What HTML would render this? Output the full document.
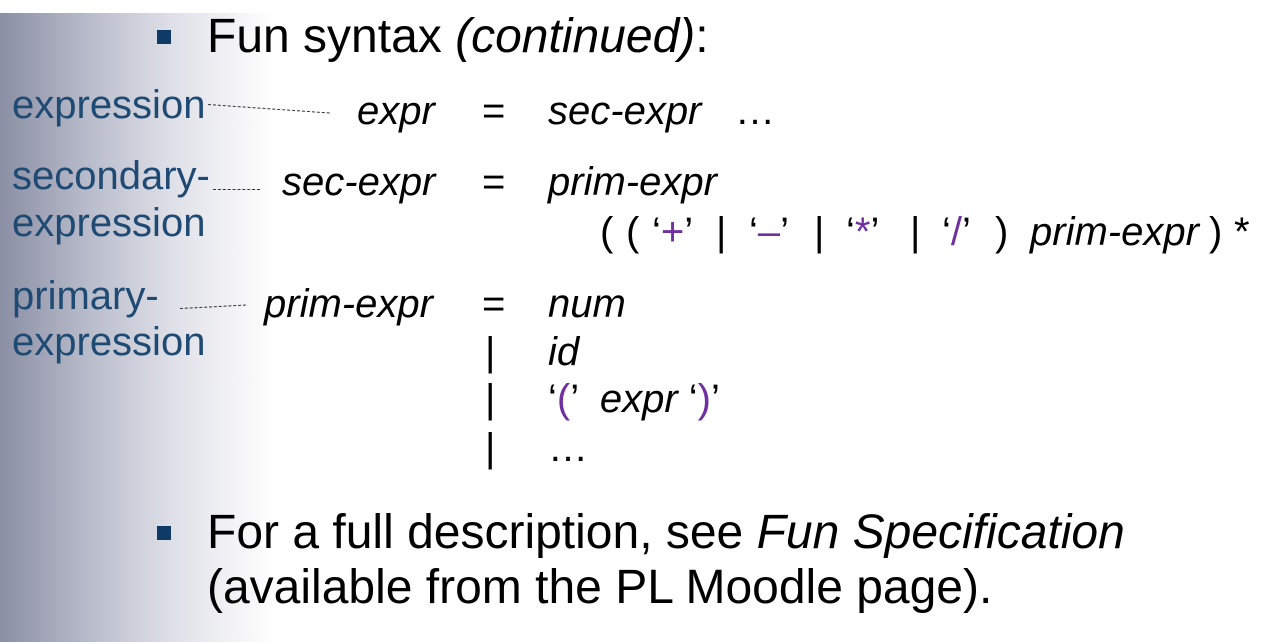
<!DOCTYPE html>
<html><head><meta charset="utf-8"><style>
body{margin:0;width:1283px;height:642px;overflow:hidden;background:#fff;position:relative;font-family:"Liberation Sans",Arial,sans-serif}
.bg{position:absolute;left:0;top:13px;width:1283px;height:629px;background:linear-gradient(to right,#8a8fa3 0px,#b9bccb 90px,#e2e3ea 180px,#fff 275px)}
.t{position:absolute;white-space:nowrap;line-height:1}
.k{color:#000;font-size:48px}
.l{color:#1f4a73;font-size:40px}
.g{color:#000;font-size:40px}
i{font-style:italic}
.p{color:#7030a0}
.sq{position:absolute;width:14px;height:14px;background:#0d3b66}
.d{position:absolute;border-top:1px dashed #333;height:0}
</style></head><body>
<div class="bg"></div>
<div class="sq" style="left:157px;top:30px"></div>
<div class="t k" style="left:207px;top:13px">Fun syntax <i>(continued)</i>:</div>

<div class="t l" style="left:12px;top:85px">expression</div>
<div class="d" style="left:208px;top:104px;width:122px;transform:rotate(4deg);transform-origin:left"></div>
<div class="t g" style="left:357px;top:91px"><i>expr</i></div>
<div class="t g" style="left:482px;top:91px">=</div>
<div class="t g" style="left:548px;top:91px"><i>sec-expr</i></div>
<div class="t g" style="left:735px;top:91px">…</div>

<div class="t l" style="left:12px;top:156px">secondary-</div>
<div class="t l" style="left:12px;top:203px">expression</div>
<div class="d" style="left:213px;top:189px;width:47px"></div>
<div class="t g" style="left:282px;top:162px"><i>sec-expr</i></div>
<div class="t g" style="left:482px;top:162px">=</div>
<div class="t g" style="left:548px;top:162px"><i>prim-expr</i></div>

<div class="t g" style="left:600px;top:212px">(</div>
<div class="t g" style="left:626px;top:212px">(</div>
<div class="t g" style="left:652px;top:212px">‘<span class="p">+</span>’</div>
<div class="t g" style="left:716px;top:212px">|</div>
<div class="t g" style="left:749px;top:212px">‘<span class="p">–</span>’</div>
<div class="t g" style="left:814px;top:212px">|</div>
<div class="t g" style="left:846px;top:212px">‘<span class="p">*</span>’</div>
<div class="t g" style="left:910px;top:212px">|</div>
<div class="t g" style="left:942px;top:212px">‘<span class="p">/</span>’</div>
<div class="t g" style="left:995px;top:212px">)</div>
<div class="t g" style="left:1030px;top:212px"><i>prim-expr</i></div>
<div class="t g" style="left:1209px;top:212px">)</div>
<div class="t g" style="left:1234px;top:212px">*</div>

<div class="t l" style="left:12px;top:276px">primary-</div>
<div class="t l" style="left:12px;top:322px">expression</div>
<div class="d" style="left:180px;top:308px;width:66px;transform:rotate(-3deg);transform-origin:left"></div>
<div class="t g" style="left:264px;top:284px"><i>prim-expr</i></div>
<div class="t g" style="left:482px;top:284px">=</div>
<div class="t g" style="left:548px;top:284px"><i>num</i></div>
<div class="t g" style="left:485px;top:332px">|</div>
<div class="t g" style="left:548px;top:332px"><i>id</i></div>
<div class="t g" style="left:485px;top:379px">|</div>
<div class="t g" style="left:548px;top:379px">‘<span class="p">(</span>’ &nbsp;<i>expr</i> ‘<span class="p">)</span>’</div>
<div class="t g" style="left:485px;top:428px">|</div>
<div class="t g" style="left:548px;top:428px">…</div>

<div class="sq" style="left:157px;top:526px"></div>
<div class="t k" style="left:207px;top:509px">For a full description, see <i>Fun Specification</i></div>
<div class="t k" style="left:207px;top:564px">(available from the PL Moodle page).</div>
</body></html>
